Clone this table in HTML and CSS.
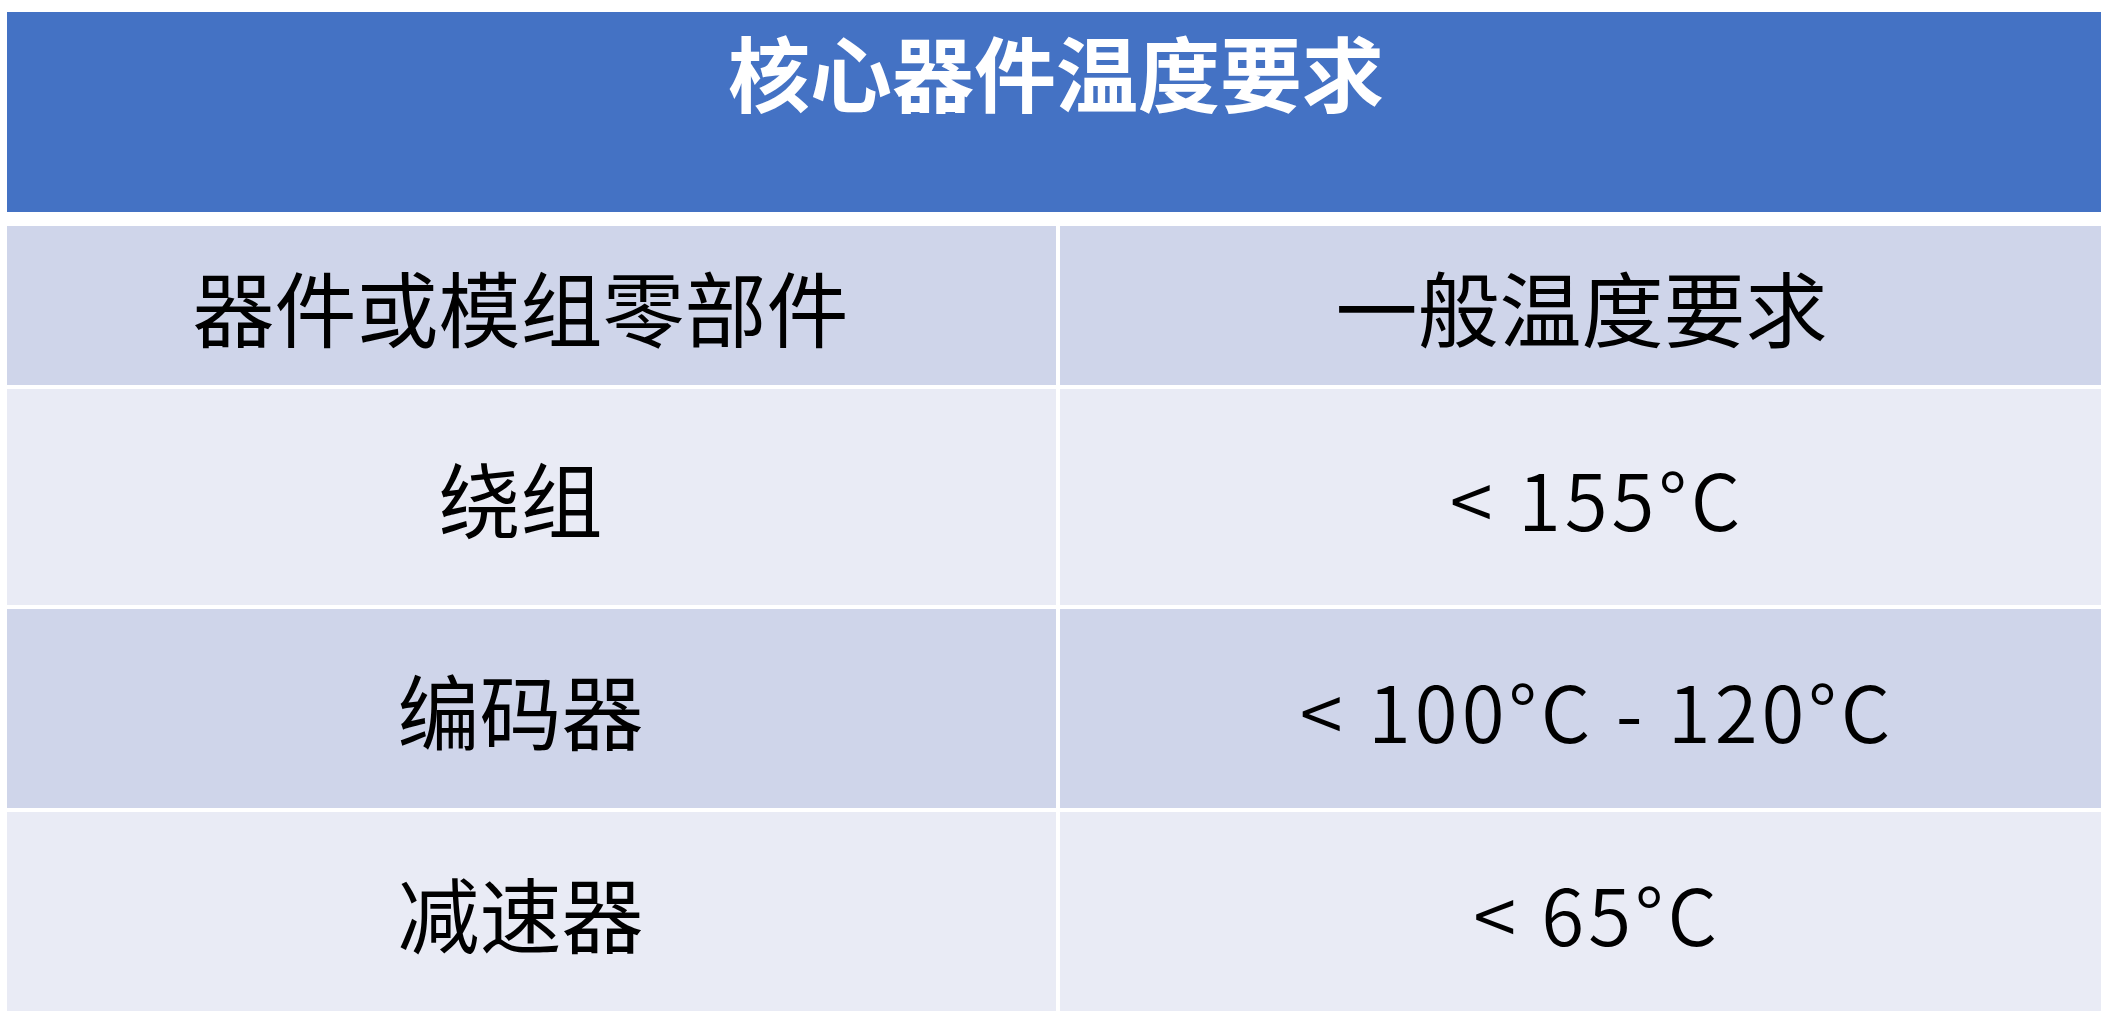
FILE: index.html
```html
<!DOCTYPE html>
<html lang="zh-CN">
<head>
<meta charset="utf-8">
<title>核心器件温度要求</title>
<link rel="stylesheet" href="styles.css">
</head>
<body>
<div class="page">
  <div class="banner">
    <h1 class="banner-title">核心器件温度要求</h1>
  </div>
  <div class="grid">
    <div class="cell head col-a">器件或模组零部件</div>
    <div class="cell head col-h">一般温度要求</div>

    <div class="cell light col-a">绕组</div>
    <div class="cell light col-b">&lt; 155°C</div>

    <div class="cell dark col-a">编码器</div>
    <div class="cell dark col-b">&lt; 100°C - 120°C</div>

    <div class="cell light col-a">减速器</div>
    <div class="cell light col-b">&lt; 65°C</div>
  </div>
</div>
</body>
</html>
```

FILE: styles.css
```css
html, body {
  margin: 0;
  padding: 0;
  background: #ffffff;
}

body {
  font-family: "Noto Sans CJK SC", "Noto Sans", sans-serif;
  color: #000000;
}

.page {
  padding: 12px 16px 0 7px;
  width: 2094px;
}

.banner {
  background: #4472c4;
  height: 200px;
  box-sizing: border-box;
  padding-top: 18px;
  margin-bottom: 14px;
}

.banner-title {
  margin: 0;
  text-align: center;
  color: #ffffff;
  font-size: 82px;
  font-weight: 700;
  line-height: 1;
  padding-left: 4px;
}

.grid {
  display: grid;
  grid-template-columns: 1049px 1041px;
  grid-template-rows: 159px 216px 199px 199px;
  gap: 4px;
}

.cell {
  display: flex;
  align-items: center;
  justify-content: center;
  font-size: 82px;
  line-height: 1;
  box-sizing: border-box;
}

.head {
  background: #cfd5ea;
}

.dark {
  background: #cfd5ea;
}

.light {
  background: #e9ebf5;
}

.col-a {
  padding-right: 22px;
}

.col-h {
  padding-left: 2px;
}

.col-b {
  font-size: 78px;
  font-weight: 350;
  letter-spacing: 4px;
  padding-left: 33px;
}
```
